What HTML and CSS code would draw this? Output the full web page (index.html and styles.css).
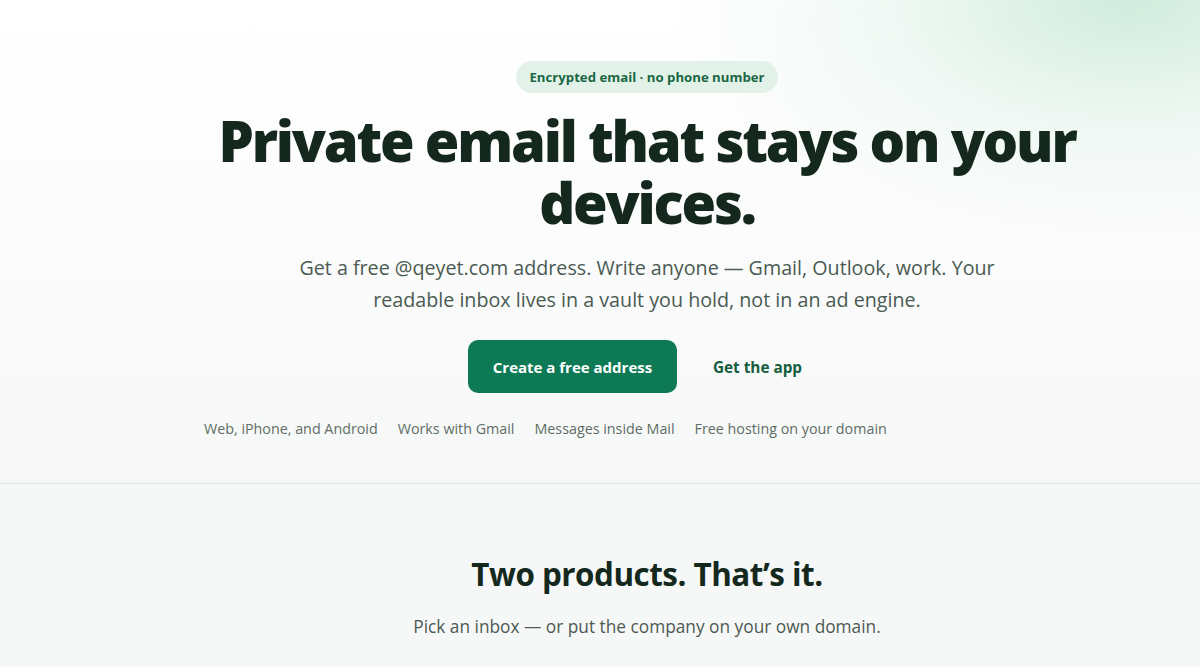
FILE: index.html
```html
<!DOCTYPE html>
<html lang="en">
<head>
<meta charset="utf-8">
<title>Qeyet — Private email</title>
<link rel="stylesheet" href="styles.css">
</head>
<body>
<section class="hero">
  <div class="hero-inner">
    <span class="badge">Encrypted email · no phone number</span>
    <h1 class="title">Private email that stays on your devices.</h1>
    <p class="lead">Get a free @qeyet.com address. Write anyone — Gmail, Outlook, work. Your readable inbox lives in a vault you hold, not in an ad engine.</p>
    <div class="actions">
      <a class="btn-primary" href="#">Create a free address</a>
      <a class="btn-link" href="#">Get the app</a>
    </div>
    <ul class="features">
      <li>Web, iPhone, and Android</li>
      <li>Works with Gmail</li>
      <li>Messages inside Mail</li>
      <li>Free hosting on your domain</li>
    </ul>
  </div>
</section>
<section class="products">
  <h2 class="section-title">Two products. That’s it.</h2>
  <p class="section-sub">Pick an inbox — or put the company on your own domain.</p>
</section>
</body>
</html>
```
FILE: styles.css
```css
* { box-sizing: border-box; }
html, body { margin: 0; padding: 0; }
body {
  font-family: "Open Sans", "Noto Sans", sans-serif;
  background: #f6f8f7;
  color: #14261d;
}
.hero {
  background:
    radial-gradient(ellipse 460px 240px at 1130px 0px, rgba(200, 233, 215, 0.85), rgba(222, 241, 231, 0.4) 55%, rgba(255,255,255,0) 100%),
    linear-gradient(180deg, #ffffff 0%, #f6f8f7 100%);
  border-bottom: 1px solid #dde3e0;
  height: 484px;
}
.hero-inner {
  display: flex;
  flex-direction: column;
  align-items: center;
  padding-top: 61px;
  padding-left: 94px;
  text-align: center;
}
.badge {
  display: inline-block;
  background: #e2f2e9;
  color: #1b6744;
  font-size: 13.2px;
  font-weight: 700;
  line-height: 32px;
  height: 32px;
  padding: 0 13px;
  border-radius: 16px;
}
.title {
  margin: 16px 0 0;
  font-size: 56px;
  font-weight: 800;
  line-height: 62px;
  letter-spacing: -2.2px;
  color: #15281e;
  max-width: 900px;
}
.lead {
  margin: 19px 0 0;
  font-size: 19.7px;
  line-height: 32px;
  color: #4b5a52;
  max-width: 720px;
}
.actions {
  margin-top: 24px;
  margin-right: 24px;
  display: flex;
  align-items: center;
  gap: 36px;
}
.btn-primary {
  display: inline-flex;
  align-items: center;
  justify-content: center;
  width: 209px;
  height: 53px;
  background: #0e7a55;
  color: #ffffff;
  border-radius: 10px;
  font-size: 15px;
  font-weight: 700;
  text-decoration: none;
}
.btn-link {
  color: #155d3f;
  font-size: 15.3px;
  font-weight: 700;
  text-decoration: none;
}
.features {
  list-style: none;
  margin: 26px 0 0;
  padding: 0;
  width: 886px;
  display: flex;
  justify-content: flex-start;
  gap: 20px;
  font-size: 14.3px;
  color: #5f6d66;
}
.products {
  text-align: center;
  padding-top: 68px;
  padding-left: 94px;
}
.section-title {
  margin: 0;
  font-size: 31.4px;
  font-weight: 700;
  color: #15281e;
  letter-spacing: -0.5px;
  line-height: 44px;
}
.section-sub {
  margin: 19px 0 0;
  font-size: 17.3px;
  color: #4d5a54;
}
```
